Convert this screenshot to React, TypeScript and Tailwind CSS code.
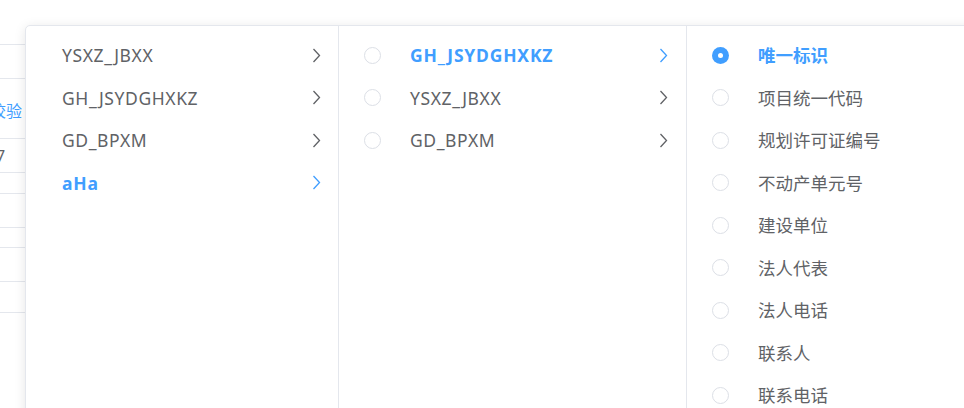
import React from "react";

const FONT = { fontFamily: '"Noto Sans", "Noto Sans CJK SC", sans-serif' };

function Chevron({ active }: { active?: boolean }) {
  return (
    <svg width="9" height="15" viewBox="0 0 9 15" className="shrink-0">
      <polyline
        points="1.5,1 7.5,7.5 1.5,14"
        fill="none"
        stroke={active ? "#409eff" : "#606266"}
        strokeWidth="1.3"
      />
    </svg>
  );
}

function Radio({ checked }: { checked?: boolean }) {
  return checked ? (
    <span className="w-[17px] h-[17px] rounded-full bg-[#409eff] flex items-center justify-center shrink-0">
      <span className="w-[5px] h-[5px] rounded-full bg-white" />
    </span>
  ) : (
    <span className="w-[17px] h-[17px] rounded-full border border-[#dcdfe6] bg-white shrink-0" />
  );
}

const col1 = ["YSXZ_JBXX", "GH_JSYDGHXKZ", "GD_BPXM", "aHa"];
const col2 = ["GH_JSYDGHXKZ", "YSXZ_JBXX", "GD_BPXM"];
const col3 = [
  "唯一标识",
  "项目统一代码",
  "规划许可证编号",
  "不动产单元号",
  "建设单位",
  "法人代表",
  "法人电话",
  "联系人",
  "联系电话",
  "联系地址",
];

const bgRows = [45, 34, 60, 34, 21, 34, 20, 34, 31];

export default function App() {
  return (
    <div className="relative w-[964px] h-[408px] overflow-hidden bg-white" style={FONT}>
      {/* background table */}
      <div className="flex flex-col w-[400px]">
        {bgRows.map((h, i) => (
          <div
            key={i}
            className="border-b border-[#e4e7ed] flex items-center"
            style={{ height: h }}
          >
            {i === 2 && (
              <span className="ml-[-10px] mt-[5px] text-[16px] text-[#409eff] whitespace-nowrap">
                校验
              </span>
            )}
            {i === 3 && (
              <span className="ml-[-4px] text-[16px] text-[#606266]">7</span>
            )}
          </div>
        ))}
      </div>

      {/* cascader panel */}
      <div className="absolute left-[25px] top-[25px] w-[1000px] h-[460px] bg-white border border-[#e4e7ed] rounded-[5px] shadow-[0_2px_12px_0_rgba(0,0,0,0.1)] flex">
        <div className="w-[313px] border-r border-[#e4e7ed] pt-[8px] flex flex-col">
          {col1.map((t, i) => {
            const active = i === 3;
            return (
              <div
                key={t}
                className={`h-[42.5px] flex items-center pl-[36px] pr-[17px] text-[17.5px] ${
                  active ? "text-[#409eff] font-bold tracking-[0.8px]" : "text-[#606266] tracking-[0.6px]"
                }`}
              >
                <span className="flex-1">{t}</span>
                <Chevron active={active} />
              </div>
            );
          })}
        </div>
        <div className="w-[348px] border-r border-[#e4e7ed] pt-[8px] flex flex-col">
          {col2.map((t, i) => {
            const active = i === 0;
            return (
              <div
                key={t}
                className={`h-[42.5px] flex items-center pl-[25px] pr-[18px] text-[17.5px] ${
                  active ? "text-[#409eff] font-bold tracking-[0.8px]" : "text-[#606266] tracking-[0.6px]"
                }`}
              >
                <Radio />
                <span className="flex-1 ml-[29px]">{t}</span>
                <Chevron active={active} />
              </div>
            );
          })}
        </div>
        <div className="flex-1 pt-[8px] flex flex-col">
          {col3.map((t, i) => {
            const active = i === 0;
            return (
              <div
                key={t}
                className={`h-[42.5px] flex items-center pl-[25px] text-[17.5px] ${
                  active ? "text-[#409eff] font-bold" : "text-[#606266]"
                }`}
              >
                <Radio checked={active} />
                <span className="ml-[29px]">{t}</span>
              </div>
            );
          })}
        </div>
      </div>
    </div>
  );
}
